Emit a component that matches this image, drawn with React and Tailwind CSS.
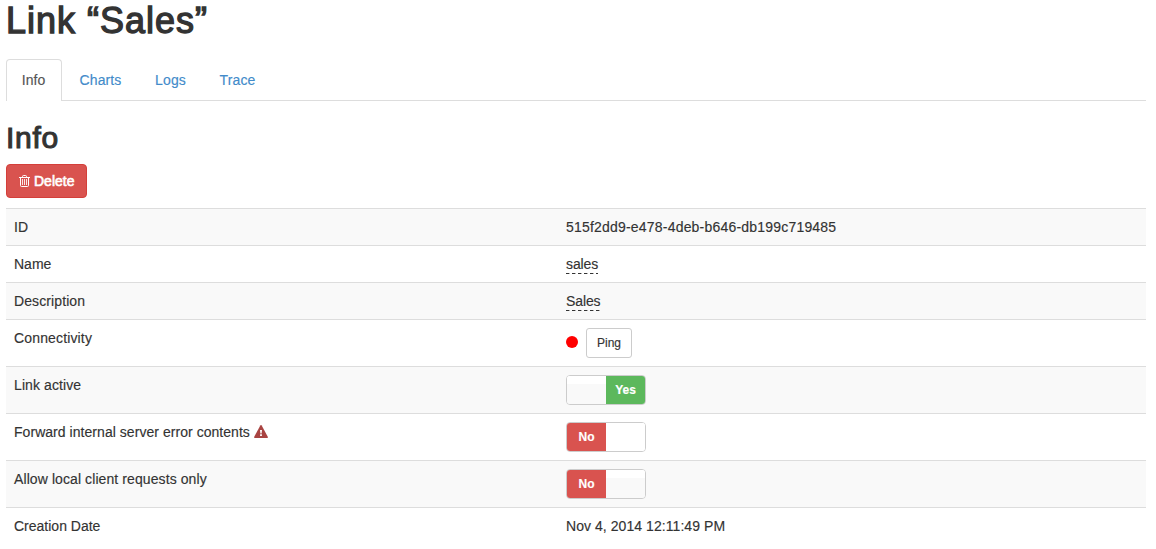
const tabs = [
  { label: 'Charts', width: 'w-[73px]', spacing: 'tracking-[0.1px]' },
  { label: 'Logs', width: 'w-[63px]', spacing: 'tracking-[0.1px]' },
  { label: 'Trace', width: 'w-[67px]', spacing: 'tracking-[0.15px]' },
];

function TrashIcon() {
  return (
    <svg width="11" height="12" viewBox="0 0 11 12" fill="none" stroke="#fff" strokeWidth="1" className="mr-1 shrink-0">
      <path d="M0 2.5H11M3.5 2.5V1.5Q3.5 .5 4.5 .5H6.5Q7.5 .5 7.5 1.5V2.5M1.5 2.5V10.5Q1.5 11.5 2.5 11.5H8.5Q9.5 11.5 9.5 10.5V2.5" />
      <path d="M3.5 4V10M5.5 4V10M7.5 4V10" strokeOpacity=".85" />
    </svg>
  );
}

function WarningIcon() {
  return (
    <svg width="14" height="13" viewBox="0 0 14 13" className="mb-0.5 ml-1 shrink-0">
      <path d="M6.3 .5Q7 -.5 7.7 .5L13.9 12Q14.1 13 13.2 13H.8Q-.1 13 .1 12Z" fill="#a94442" />
      <path d="M6 5H8L7.6 8.5H6.4ZM6.1 9.3H7.9V11H6.1Z" fill="#fff" />
    </svg>
  );
}

function Row({ label, tall, striped, children, icon, spacing = '' }) {
  return (
    <div className={`flex border-t border-[#ddd] ${tall ? 'h-[47px]' : 'h-[37px]'} ${striped ? 'bg-[#f9f9f9]' : 'bg-white'}`}>
      <div className={`flex h-9 w-[552px] shrink-0 items-center pl-2 ${spacing}`}>
        {label}
        {icon}
      </div>
      <div className="flex items-start pl-2 pt-2">{children}</div>
    </div>
  );
}

function Editable({ children, width }) {
  return (
    <span className={`flex flex-col leading-5 tracking-[-0.1px] ${width}`}>
      {children}
      <svg height="1" className="-mt-px w-full">
        <line x1="0" y1=".5" x2="100%" y2=".5" stroke="#333" strokeDasharray="3.4 2.6" />
      </svg>
    </span>
  );
}

function Toggle({ on, striped }) {
  const blank = (
    <span className={`flex flex-1 flex-col ${striped ? 'bg-[#f9f9f9]' : 'bg-white'}`}>
      <span className="h-2 bg-white" />
    </span>
  );
  return (
    <button className="flex h-[30px] w-20 overflow-hidden rounded-[4px] border border-[#ccc] text-[12px] font-bold text-white">
      {on && blank}
      <span className={`flex w-[39px] items-center justify-center ${on ? 'bg-[#5cb85c]' : 'bg-[#d9534f]'}`}>
        {on ? 'Yes' : 'No'}
      </span>
      {!on && blank}
    </button>
  );
}

export default function App() {
  return (
    <main className="h-[549px] overflow-hidden bg-white pl-1.5 pr-2.5 font-['Liberation_Sans',Arial,sans-serif] text-[14px] leading-5 text-[#333]">
      <h1 className="h-[59px] pt-px text-[36px] leading-[40px] tracking-[1px] [-webkit-text-stroke:1.3px_#333]">Link “Sales”</h1>
      <nav className="flex h-[42px] border-b border-[#ddd] [-webkit-text-stroke:0.15px_currentColor]">
        <button className="mr-0.5 h-[42px] w-14 rounded-t-[4px] border border-b-0 border-[#ddd] bg-white pb-0.5 pr-px text-[#555]">Info</button>
        {tabs.map((tab) => (
          <button key={tab.label} className={`mr-0.5 h-[42px] pb-px text-[#428bca] ${tab.width} ${tab.spacing}`}>{tab.label}</button>
        ))}
      </nav>
      <h2 className="h-[63px] pt-5 text-[30px] leading-[33px] tracking-[0.7px] [-webkit-text-stroke:1.1px_#333]">Info</h2>
      <button className="mb-2.5 flex h-[34px] w-[81px] items-center rounded-[4px] border border-[#d43f3a] bg-[#d9534f] pl-3 text-white [-webkit-text-stroke:0.6px_#fff]">
        <TrashIcon />
        Delete
      </button>
      <section className="[-webkit-text-stroke:0.15px_currentColor]">
        <Row label="ID" striped><span className="tracking-[0.2px]">515f2dd9-e478-4deb-b646-db199c719485</span></Row>
        <Row label="Name"><Editable width="w-8">sales</Editable></Row>
        <Row label="Description" spacing="tracking-[0.1px]" striped><Editable width="w-[34px]">Sales</Editable></Row>
        <Row label="Connectivity" spacing="tracking-[0.15px]" tall>
          <span className="mr-2 mt-2 size-3 rounded-full bg-[#f00]" />
          <button className="h-[30px] w-[46px] rounded-[3px] border border-[#ccc] bg-white text-[12px]">Ping</button>
        </Row>
        <Row label="Link active" spacing="tracking-[0.1px]" tall striped><Toggle on striped /></Row>
        <Row label="Forward internal server error contents" spacing="tracking-[0.045px]" tall icon={<WarningIcon />}><Toggle /></Row>
        <Row label="Allow local client requests only" spacing="tracking-[0.09px]" tall striped><Toggle striped /></Row>
        <Row label="Creation Date"><span className="tracking-[0.06px]">Nov 4, 2014 12:11:49 PM</span></Row>
      </section>
    </main>
  );
}
